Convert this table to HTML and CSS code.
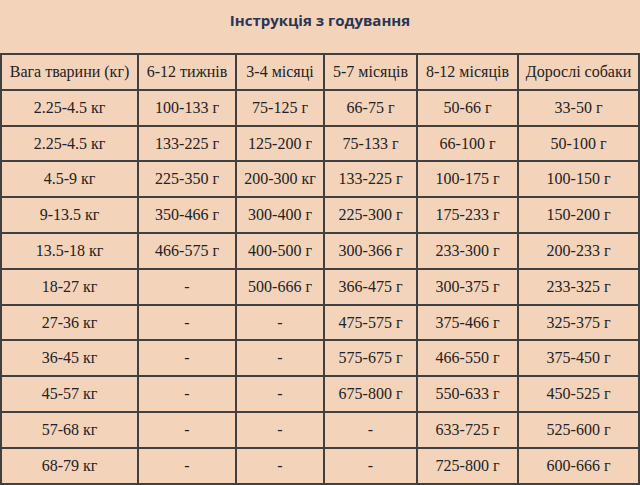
FILE: index.html
```html
<!DOCTYPE html>
<html lang="uk">
<head>
<meta charset="utf-8">
<link rel="stylesheet" href="styles.css">
</head>
<body>
<div class="page">
  <h2 class="title">Інструкція з годування</h2>
  <table class="feed">
    <colgroup>
      <col class="c1"><col class="c2"><col class="c3"><col class="c4"><col class="c5"><col class="c6">
    </colgroup>
    <tr><td>Вага тварини (кг)</td><td>6-12 тижнів</td><td>3-4 місяці</td><td>5-7 місяців</td><td>8-12 місяців</td><td>Дорослі собаки</td></tr>
    <tr><td>2.25-4.5 кг</td><td>100-133 г</td><td>75-125 г</td><td>66-75 г</td><td>50-66 г</td><td>33-50 г</td></tr>
    <tr><td>2.25-4.5 кг</td><td>133-225 г</td><td>125-200 г</td><td>75-133 г</td><td>66-100 г</td><td>50-100 г</td></tr>
    <tr><td>4.5-9 кг</td><td>225-350 г</td><td>200-300 кг</td><td>133-225 г</td><td>100-175 г</td><td>100-150 г</td></tr>
    <tr><td>9-13.5 кг</td><td>350-466 г</td><td>300-400 г</td><td>225-300 г</td><td>175-233 г</td><td>150-200 г</td></tr>
    <tr><td>13.5-18 кг</td><td>466-575 г</td><td>400-500 г</td><td>300-366 г</td><td>233-300 г</td><td>200-233 г</td></tr>
    <tr><td>18-27 кг</td><td>-</td><td>500-666 г</td><td>366-475 г</td><td>300-375 г</td><td>233-325 г</td></tr>
    <tr><td>27-36 кг</td><td>-</td><td>-</td><td>475-575 г</td><td>375-466 г</td><td>325-375 г</td></tr>
    <tr><td>36-45 кг</td><td>-</td><td>-</td><td>575-675 г</td><td>466-550 г</td><td>375-450 г</td></tr>
    <tr><td>45-57 кг</td><td>-</td><td>-</td><td>675-800 г</td><td>550-633 г</td><td>450-525 г</td></tr>
    <tr><td>57-68 кг</td><td>-</td><td>-</td><td>-</td><td>633-725 г</td><td>525-600 г</td></tr>
    <tr><td>68-79 кг</td><td>-</td><td>-</td><td>-</td><td>725-800 г</td><td>600-666 г</td></tr>
  </table>
</div>
</body>
</html>
```
FILE: styles.css
```css
html, body {
  margin: 0;
  padding: 0;
  background: #f4d3bb;
}
.page {
  width: 640px;
}
.title {
  margin: 0;
  padding-top: 10px;
  height: 43px;
  font-family: "Open Sans", "Noto Sans", sans-serif;
  font-weight: 700;
  font-size: 15px;
  line-height: 20px;
  color: #263654;
  text-align: center;
}
.feed {
  border-collapse: collapse;
  width: 639px;
  table-layout: fixed;
  font-family: "Liberation Serif", "Times New Roman", serif;
  font-size: 16px;
  color: #222;
}
.feed td {
  border: 2px solid #404040;
  padding: 8px 4px 8px 4px;
  line-height: 17.8px;
  text-align: center;
  white-space: nowrap;
}
.c1 { width: 137px; }
.c2 { width: 98px; }
.c3 { width: 88px; }
.c4 { width: 93px; }
.c5 { width: 101px; }
.c6 { width: 121px; }
```
